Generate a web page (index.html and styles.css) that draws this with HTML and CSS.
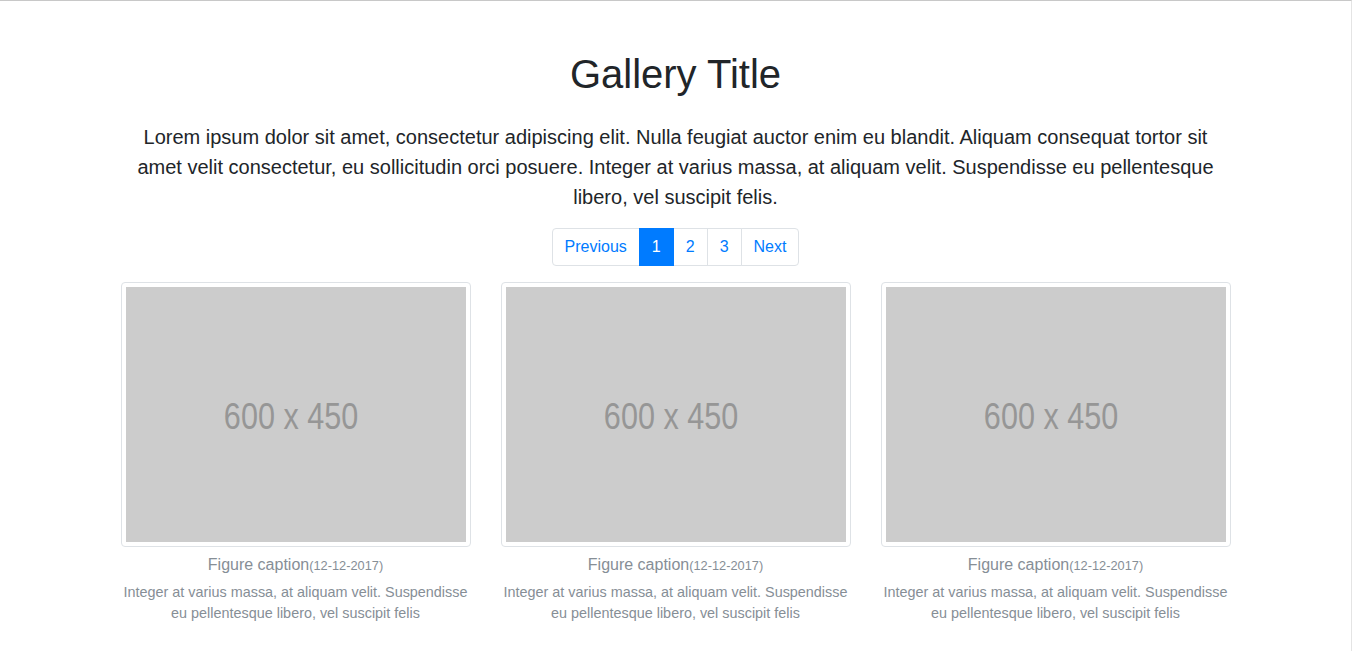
FILE: index.html
```html
<!DOCTYPE html>
<html lang="en">
<head>
<meta charset="utf-8">
<title>Gallery</title>
<link rel="stylesheet" href="styles.css">
</head>
<body>
<div class="frame">
  <main class="container">
    <h1 class="title">Gallery Title</h1>
    <p class="lead">Lorem ipsum dolor sit amet, consectetur adipiscing elit. Nulla feugiat auctor enim eu blandit. Aliquam consequat tortor sit amet velit consectetur, eu sollicitudin orci posuere. Integer at varius massa, at aliquam velit. Suspendisse eu pellentesque libero, vel suscipit felis.</p>
    <nav class="pager">
      <ul class="pagination">
        <li class="page-item"><a class="page-link" href="#">Previous</a></li>
        <li class="page-item active"><a class="page-link" href="#">1</a></li>
        <li class="page-item"><a class="page-link" href="#">2</a></li>
        <li class="page-item"><a class="page-link" href="#">3</a></li>
        <li class="page-item"><a class="page-link" href="#">Next</a></li>
      </ul>
    </nav>
    <div class="gallery">
      <figure class="figure">
        <div class="thumb"><div class="ph"><span class="ph-text">600 x 450</span></div></div>
        <figcaption class="caption">Figure caption<small class="date">(12-12-2017)</small></figcaption>
        <p class="desc">Integer at varius massa, at aliquam velit. Suspendisse eu pellentesque libero, vel suscipit felis</p>
      </figure>
      <figure class="figure">
        <div class="thumb"><div class="ph"><span class="ph-text">600 x 450</span></div></div>
        <figcaption class="caption">Figure caption<small class="date">(12-12-2017)</small></figcaption>
        <p class="desc">Integer at varius massa, at aliquam velit. Suspendisse eu pellentesque libero, vel suscipit felis</p>
      </figure>
      <figure class="figure">
        <div class="thumb"><div class="ph"><span class="ph-text">600 x 450</span></div></div>
        <figcaption class="caption">Figure caption<small class="date">(12-12-2017)</small></figcaption>
        <p class="desc">Integer at varius massa, at aliquam velit. Suspendisse eu pellentesque libero, vel suscipit felis</p>
      </figure>
    </div>
  </main>
</div>
</body>
</html>
```
FILE: styles.css
```css
* { box-sizing: border-box; }
html, body { margin: 0; padding: 0; }
body {
  font-family: "Liberation Sans", Arial, sans-serif;
  font-size: 16px;
  line-height: 1.5;
  color: #212529;
  background: #fff;
}
.frame {
  min-height: 651px;
  width: 1352px;
  border-top: 1px solid #c8c8c8;
  border-right: 1px solid #e4e4e4;
}
.container {
  width: 1140px;
  margin: 0 auto;
  padding: 49px 15px 0;
  text-align: center;
}
.title {
  margin: 0 0 24px;
  font-size: 40px;
  font-weight: 500;
  line-height: 1.2;
}
.lead {
  margin: 0 0 16px;
  font-size: 20px;
  font-weight: 300;
  line-height: 30px;
}
.pager { display: flex; justify-content: center; }
.pagination {
  display: flex;
  list-style: none;
  margin: 0 0 16px;
  padding: 0;
}
.page-link {
  display: block;
  padding: 8px 12px;
  line-height: 20px;
  color: #007bff;
  text-decoration: none;
  border: 1px solid #dee2e6;
  margin-left: -1px;
  background: #fff;
}
.page-item:first-child .page-link { margin-left: 0; border-radius: 4px 0 0 4px; }
.page-item:last-child .page-link { border-radius: 0 4px 4px 0; }
.page-item.active .page-link {
  background: #007bff;
  border-color: #007bff;
  color: #fff;
  position: relative;
}
.gallery {
  display: grid;
  grid-template-columns: repeat(3, 1fr);
  margin: 0 -15px;
}
.figure {
  margin: 0;
  padding: 0 15px;
}
.thumb {
  padding: 4px;
  border: 1px solid #dee2e6;
  border-radius: 4px;
  background: #fff;
}
.ph {
  height: 255px;
  padding: 4px 8px 0 0;
  background: #cccccc;
  display: flex;
  align-items: center;
  justify-content: center;
}
.ph-text {
  font-family: "Liberation Sans", Arial, sans-serif;
  font-size: 36px;
  color: #969696;
  transform: scaleX(0.85);
  display: inline-block;
}
.caption {
  margin-top: 6px;
  font-size: 16px;
  line-height: 24px;
  color: #868e96;
}
.date { font-size: 12.8px; }
.desc {
  margin: 4px 0 0;
  font-size: 14.4px;
  line-height: 21px;
  color: #868e96;
}
```
